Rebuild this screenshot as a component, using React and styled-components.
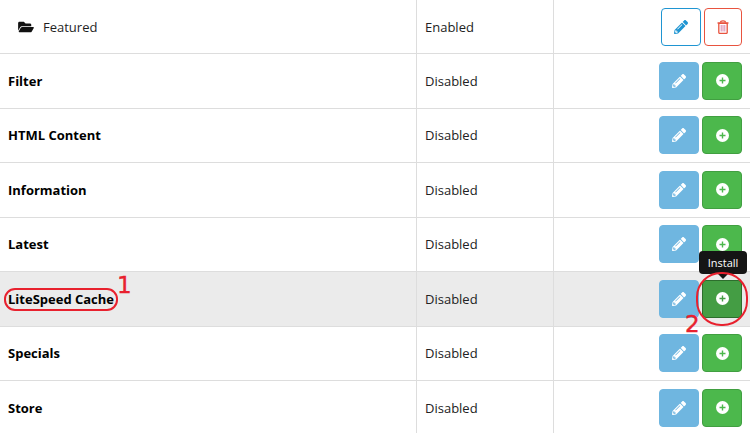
import React from "react";
import styled, { createGlobalStyle } from "styled-components";
import { FaFolderOpen, FaPencilAlt } from "react-icons/fa";

const GlobalStyle = createGlobalStyle`
  html, body {
    margin: 0;
    padding: 0;
    background: #fff;
    overflow: hidden;
  }
`;

const Page = styled.div`
  position: relative;
  width: 750px;
  height: 433px;
  overflow: hidden;
  font-family: "Open Sans", "Noto Sans", sans-serif;
  font-size: 13px;
  color: #212121;
`;

const Row = styled.div`
  display: grid;
  grid-template-columns: 417px 137px 1fr;
  height: ${(p) => (p.$first ? "54px" : "54.5px")};
  box-sizing: border-box;
  border-bottom: 1px solid #ddd;
  background: ${(p) => (p.$active ? "#ebebeb" : "#fff")};
`;

const Cell = styled.div`
  display: flex;
  align-items: center;
  box-sizing: border-box;
  border-right: 1px solid #ddd;
  padding-left: 8px;
`;

const NameCell = styled(Cell)`
  font-weight: 700;
  color: #000;
`;

const ChildName = styled(Cell)`
  padding-left: 18px;
  gap: 9px;
  color: #1f1f1f;
`;

const FolderIcon = styled(FaFolderOpen)`
  width: 16px;
  height: 14px;
  color: #111;
`;

const StatusCell = styled(Cell)`
  color: #222;
`;

const Actions = styled.div`
  display: flex;
  align-items: center;
  justify-content: flex-end;
  gap: 3px;
  padding-right: 8px;
`;

const ActionButton = styled.div`
  display: flex;
  align-items: center;
  justify-content: center;
  box-sizing: border-box;
  width: ${(p) => p.$width || 40}px;
  height: 38px;
  border-radius: 4px;
  border: 1px solid ${(p) => p.$border};
  background: ${(p) => p.$bg};
  color: ${(p) => p.$color};
  font-size: 14px;
`;

const Tooltip = styled.div`
  position: absolute;
  left: 699px;
  top: 251px;
  width: 48px;
  height: 23px;
  display: flex;
  align-items: center;
  justify-content: center;
  border-radius: 4px;
  background: #151515;
  color: #fff;
  font-size: 11px;

  &::after {
    content: "";
    position: absolute;
    left: 19px;
    bottom: -5px;
    border-left: 5px solid transparent;
    border-right: 5px solid transparent;
    border-top: 5px solid #151515;
  }
`;

const Ring = styled.div`
  position: absolute;
  left: ${(p) => p.$x}px;
  top: ${(p) => p.$y}px;
  width: ${(p) => p.$w}px;
  height: ${(p) => p.$h}px;
  box-sizing: border-box;
  border: 2px solid #e8212e;
  border-radius: ${(p) => p.$radius};
`;

const Mark = styled.div`
  position: absolute;
  left: ${(p) => p.$x}px;
  top: ${(p) => p.$y}px;
  font-family: "DejaVu Sans", sans-serif;
  font-size: 23px;
  line-height: 23px;
  color: #e8212e;
  -webkit-text-stroke: 0.4px #e8212e;
`;

const modules = [
  { name: "Filter" },
  { name: "HTML Content" },
  { name: "Information" },
  { name: "Latest" },
  { name: "LiteSpeed Cache", active: true },
  { name: "Specials" },
  { name: "Store" },
];

function PlusCircle({ color }) {
  return (
    <svg width="13" height="13" viewBox="0 0 13 13">
      <circle cx="6.5" cy="6.5" r="6.5" fill="#fff" />
      <path d="M6.5 3.5v6M3.5 6.5h6" stroke={color} strokeWidth="1.4" />
    </svg>
  );
}

function TrashIcon() {
  return (
    <svg width="12" height="14" viewBox="0 0 12 14">
      <path d="M0.5 3h11" stroke="#e8533f" strokeWidth="1.4" />
      <path d="M3.5 2.6C3.5 1.3 4.3 0.8 6 0.8s2.5 0.5 2.5 1.8" fill="none" stroke="#e8533f" strokeWidth="1.2" />
      <path d="M1.8 3.4h8.4v9a1 1 0 0 1-1 1H2.8a1 1 0 0 1-1-1z" fill="#fff" stroke="#e8533f" strokeWidth="1.3" />
      <path d="M4.2 5v6.5M6 5v6.5M7.8 5v6.5" stroke="#d98ab0" strokeWidth="1" />
    </svg>
  );
}

function EditButton() {
  return (
    <ActionButton $bg="#6fb6e0" $border="#6fb6e0" $color="#fff">
      <FaPencilAlt />
    </ActionButton>
  );
}

function InstallButton({ active }) {
  return (
    <ActionButton
      $bg={active ? "#449d44" : "#4cb84c"}
      $border={active ? "#2d6e2d" : "#419f41"}
    >
      <PlusCircle color={active ? "#449d44" : "#4cb84c"} />
    </ActionButton>
  );
}

export default function App() {
  return (
    <Page>
      <GlobalStyle />
      <Row $first>
        <ChildName>
          <FolderIcon />
          Featured
        </ChildName>
        <StatusCell>Enabled</StatusCell>
        <Actions>
          <ActionButton $bg="#fff" $border="#1f95d2" $color="#1f95d2">
            <FaPencilAlt />
          </ActionButton>
          <ActionButton $width={38} $bg="#fff" $border="#e8533f">
            <TrashIcon />
          </ActionButton>
        </Actions>
      </Row>
      {modules.map((m) => (
        <Row key={m.name} $active={m.active}>
          <NameCell>{m.name}</NameCell>
          <StatusCell>Disabled</StatusCell>
          <Actions>
            <EditButton />
            <InstallButton active={m.active} />
          </Actions>
        </Row>
      ))}
      <Tooltip>Install</Tooltip>
      <Ring $x={4} $y={288} $w={114} $h={23} $radius="11px" />
      <Mark $x={117} $y={274}>1</Mark>
      <Ring $x={696} $y={272} $w={52} $h={54} $radius="25px" />
      <Mark $x={685} $y={313}>2</Mark>
    </Page>
  );
}
